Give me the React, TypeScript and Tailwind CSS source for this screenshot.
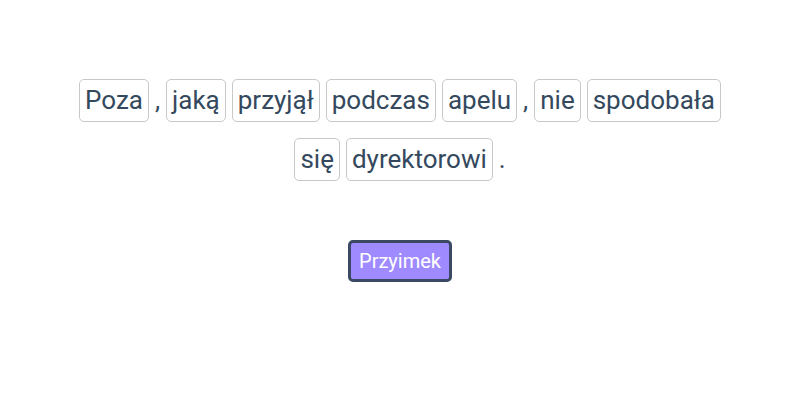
const tokens: { text: string; boxed: boolean }[] = [
  { text: "Poza", boxed: true },
  { text: ",", boxed: false },
  { text: "jaką", boxed: true },
  { text: "przyjął", boxed: true },
  { text: "podczas", boxed: true },
  { text: "apelu", boxed: true },
  { text: ",", boxed: false },
  { text: "nie", boxed: true },
  { text: "spodobała", boxed: true },
  { text: "się", boxed: true },
  { text: "dyrektorowi", boxed: true },
  { text: ".", boxed: false },
];

export default function App() {
  return (
    <div
      className="min-h-[400px] w-[800px] bg-white pt-[79px] flex flex-col items-center"
      style={{ fontFamily: "Roboto, 'Noto Sans', sans-serif" }}
    >
      <div className="w-[660px] flex flex-wrap justify-center gap-x-[6px] gap-y-[16px]">
        {tokens.map((t, i) =>
          t.boxed ? (
            <span
              key={i}
              className="h-[43px] px-[5px] flex items-center border border-[#c8c8c8] rounded-[5px] text-[26px] text-[#34495e]"
            >
              {t.text}
            </span>
          ) : (
            <span key={i} className="h-[43px] flex items-center text-[26px] text-[#34495e]">
              {t.text}
            </span>
          )
        )}
      </div>
      <button className="mt-[59px] h-[42px] px-2 border-[3px] border-[#3b4963] rounded-[5px] bg-[#9f8bff] text-white text-[20px] leading-none">
        Przyimek
      </button>
    </div>
  );
}
